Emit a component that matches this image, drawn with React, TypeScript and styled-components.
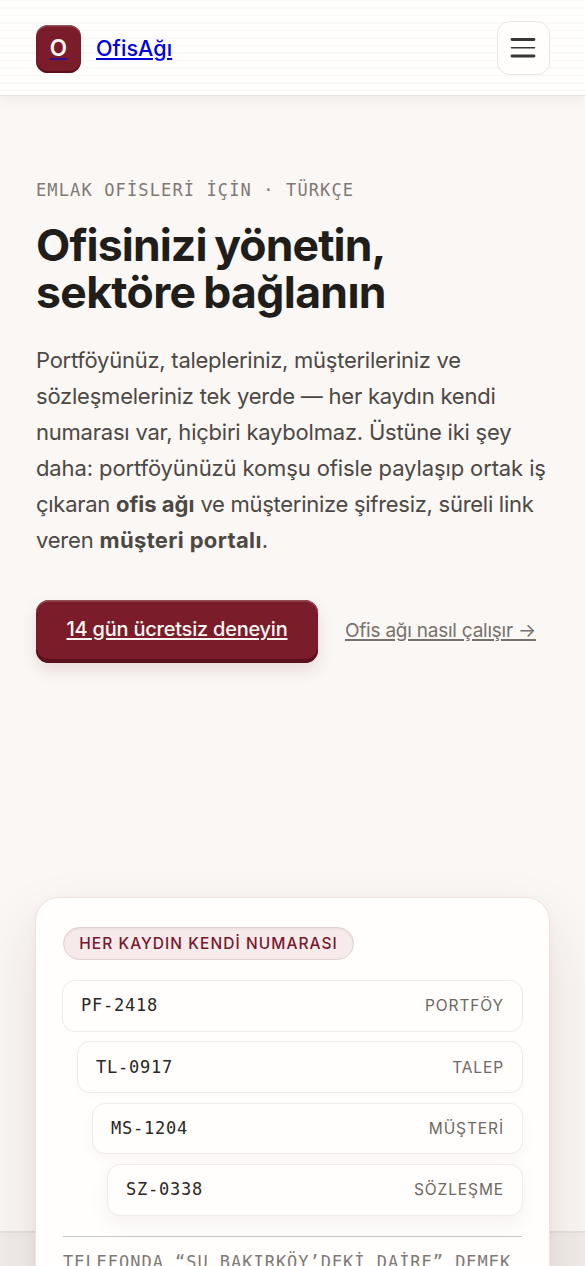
import React from "react";
import styled, { createGlobalStyle } from "styled-components";

const sans = `Inter, "Noto Sans", sans-serif`;
const mono = `"DejaVu Sans Mono", "Liberation Mono", monospace`;

const GlobalStyle = createGlobalStyle`
  *, *::before, *::after { box-sizing: border-box; }
  body { margin: 0; background: #faf7f4; font-family: ${sans}; overflow: hidden; }
  p, h1 { margin: 0; }
`;

const Page = styled.div`
  height: 1266px;
  overflow: hidden;
  background: linear-gradient(#faf7f4 0 1231.5px, #e5dfdc 1231.5px 1233px, #f1edea 1233px);
`;

const Header = styled.header`
  height: 96px;
  padding: 5px 35px 4px 36px;
  display: flex;
  align-items: center;
  justify-content: space-between;
  border-bottom: 1px solid #e7e2df;
  background: repeating-linear-gradient(#faf8f6 0 1.5px, #fffefc 1.5px 7.5px);
  box-shadow: 0 3px 12px rgba(75, 35, 30, 0.06);
`;

const Brand = styled.a`
  display: flex;
  align-items: center;
  gap: 15px;
  padding-top: 2px;
  color: #0000e0;
  font-size: 21.5px;
  font-weight: 500;
  text-decoration: underline;
  text-decoration-thickness: 1.5px;
  text-underline-offset: 2px;
`;

const Mark = styled.span`
  width: 45px;
  height: 48px;
  border-radius: 12px;
  background: #7b1c2b;
  box-shadow: inset 0 1.5px 0 #925058, inset 0 -2px 1px #5b101e;
  display: grid;
  place-items: center;
  padding-bottom: 3px;
  text-decoration: underline;
  text-decoration-color: #2d108a;
`;

const MarkLetter = styled.span`
  color: #fff7f2;
  font-size: 22.5px;
  font-weight: 600;
`;

const BrandName = styled.span`
  margin-bottom: 2px;
  letter-spacing: 0.1px;
`;

const MenuButton = styled.button`
  width: 53px;
  height: 54px;
  padding: 0 1px 1px 0;
  border: 1.5px solid #ebe5e4;
  border-radius: 13px;
  background: #fffefd;
  display: grid;
  place-items: center;
`;

const Hero = styled.main`
  padding: 82px 36px 0;
`;

const Eyebrow = styled.p`
  font: 17px/24px ${mono};
  letter-spacing: 1.13px;
  color: #7f7975;
  white-space: nowrap;
`;

const Title = styled.h1`
  margin-top: 20px;
  font-size: 44.5px;
  line-height: 47px;
  font-weight: 700;
  color: #211d1a;
  white-space: nowrap;
  word-spacing: -2px;
`;

const Line = styled.span<{ $tracking: number }>`
  display: block;
  white-space: nowrap;
  letter-spacing: ${(p) => p.$tracking}px;
`;

const Strong = styled.strong<{ $tracking: number }>`
  font-weight: 700;
  letter-spacing: ${(p) => p.$tracking}px;
`;

const Lead = styled.p`
  margin-top: 26px;
  font-size: 22px;
  line-height: 36px;
  color: #4d4844;
`;

const Actions = styled.div`
  margin-top: 42px;
  display: flex;
  align-items: center;
  gap: 27px;
  white-space: nowrap;
`;

const Primary = styled.a`
  width: 282px;
  height: 63px;
  padding-bottom: 5px;
  border-radius: 13px;
  display: grid;
  place-items: center;
  background: #7b1c2b;
  color: #fff7f2;
  font-size: 20px;
  font-weight: 500;
  letter-spacing: -0.23px;
  text-decoration: underline;
  text-decoration-thickness: 1.5px;
  text-underline-offset: 2px;
  box-shadow: inset 0 1.5px 0 #925058, inset 0 -4px 1px #5b101e, 0 7px 16px rgba(123, 28, 43, 0.13);
`;

const Secondary = styled.a`
  padding-bottom: 3px;
  color: #77716d;
  font-size: 19px;
  letter-spacing: -0.23px;
  text-decoration: underline;
  text-decoration-thickness: 1.5px;
  text-underline-offset: 2px;
`;

const Card = styled.section`
  margin: 234px 0 0 -1px;
  width: 515px;
  height: 430px;
  padding: 29px 26px 0 27px;
  border: 1.5px solid #f0e1df;
  border-radius: 24px;
  background: #fffefd;
  box-shadow: 0 4px 12px rgba(123, 28, 43, 0.04), 0 30px 64px rgba(90, 30, 30, 0.12);
`;

const Pill = styled.div`
  width: 291px;
  height: 33px;
  border: 1.5px solid #dfcfd0;
  border-radius: 17px;
  display: grid;
  place-items: center;
  background: #f6eaeb;
  box-shadow: inset 0 1.5px 2px rgba(90, 30, 40, 0.05);
  color: #76192e;
  font-size: 15.5px;
  font-weight: 500;
  letter-spacing: 1.05px;
  white-space: nowrap;
`;

const Records = styled.div`
  margin: 20px 0 0 -1px;
  display: grid;
  gap: 9.6px;
`;

const Record = styled.div<{ $level: number }>`
  height: 51.75px;
  margin-left: ${(p) => p.$level * 15}px;
  padding: 0 19px 1px 18px;
  display: flex;
  align-items: center;
  justify-content: space-between;
  border: 1.5px solid #f0e9e8;
  border-radius: 13px;
  background: #fffefd;
  box-shadow: 0 ${(p) => p.$level * 3}px ${(p) => p.$level * 7}px rgba(123, 28, 43, ${(p) => p.$level * 0.02});
`;

const Code = styled.span`
  font: 17px ${mono};
  letter-spacing: 0.76px;
  color: #2a2623;
`;

const Kind = styled.span`
  padding-top: 1px;
  color: #6d6763;
  font-size: 15.5px;
  letter-spacing: 0.9px;
  margin-right: -1px;
`;

const Note = styled.p`
  margin: 20px 1px 0 0;
  padding-top: 12px;
  border-top: 1.5px solid #cbc5c5;
  font: 17px/27px ${mono};
  letter-spacing: 0.97px;
  color: #7f7975;
  white-space: nowrap;
`;

const records: [string, string][] = [
  ["PF-2418", "PORTFÖY"],
  ["TL-0917", "TALEP"],
  ["MS-1204", "MÜŞTERİ"],
  ["SZ-0338", "SÖZLEŞME"],
];

export default function App() {
  return (
    <Page lang="tr">
      <GlobalStyle />
      <Header>
        <Brand href="#">
          <Mark><MarkLetter>O</MarkLetter></Mark>
          <BrandName>OfisAğı</BrandName>
        </Brand>
        <MenuButton aria-label="Menü">
          <svg width="26" height="22" viewBox="0 0 26 22" stroke="#393636" strokeLinecap="round">
            <path d="M2 2.5h22M2 19h22" strokeWidth="2.8" />
            <path d="M1.5 10.8h23" strokeWidth="1.6" />
          </svg>
        </MenuButton>
      </Header>
      <Hero>
        <Eyebrow>EMLAK OFİSLERİ İÇİN · TÜRKÇE</Eyebrow>
        <Title>
          <Line $tracking={-0.9}>Ofisinizi yönetin,</Line>
          <Line $tracking={-0.65}>sektöre bağlanın</Line>
        </Title>
        <Lead>
          <Line $tracking={-0.26}>Portföyünüz, talepleriniz, müşterileriniz ve</Line>
          <Line $tracking={-0.22}>sözleşmeleriniz tek yerde — her kaydın kendi</Line>
          <Line $tracking={-0.22}>numarası var, hiçbiri kaybolmaz. Üstüne iki şey</Line>
          <Line $tracking={-0.11}>daha: portföyünüzü komşu ofisle paylaşıp ortak iş</Line>
          <Line $tracking={-0.28}>çıkaran <Strong $tracking={0}>ofis ağı</Strong> ve müşterinize şifresiz, süreli link</Line>
          <Line $tracking={-0.2}>veren <Strong $tracking={0.35}>müşteri portalı</Strong>.</Line>
        </Lead>
        <Actions>
          <Primary href="#">14 gün ücretsiz deneyin</Primary>
          <Secondary href="#">Ofis ağı nasıl çalışır →</Secondary>
        </Actions>
        <Card>
          <Pill>HER KAYDIN KENDİ NUMARASI</Pill>
          <Records>
            {records.map(([code, kind], i) => (
              <Record key={code} $level={i}>
                <Code>{code}</Code>
                <Kind>{kind}</Kind>
              </Record>
            ))}
          </Records>
          <Note>TELEFONDA “ŞU BAKIRKÖY’DEKİ DAİRE” DEMEK</Note>
        </Card>
      </Hero>
    </Page>
  );
}
